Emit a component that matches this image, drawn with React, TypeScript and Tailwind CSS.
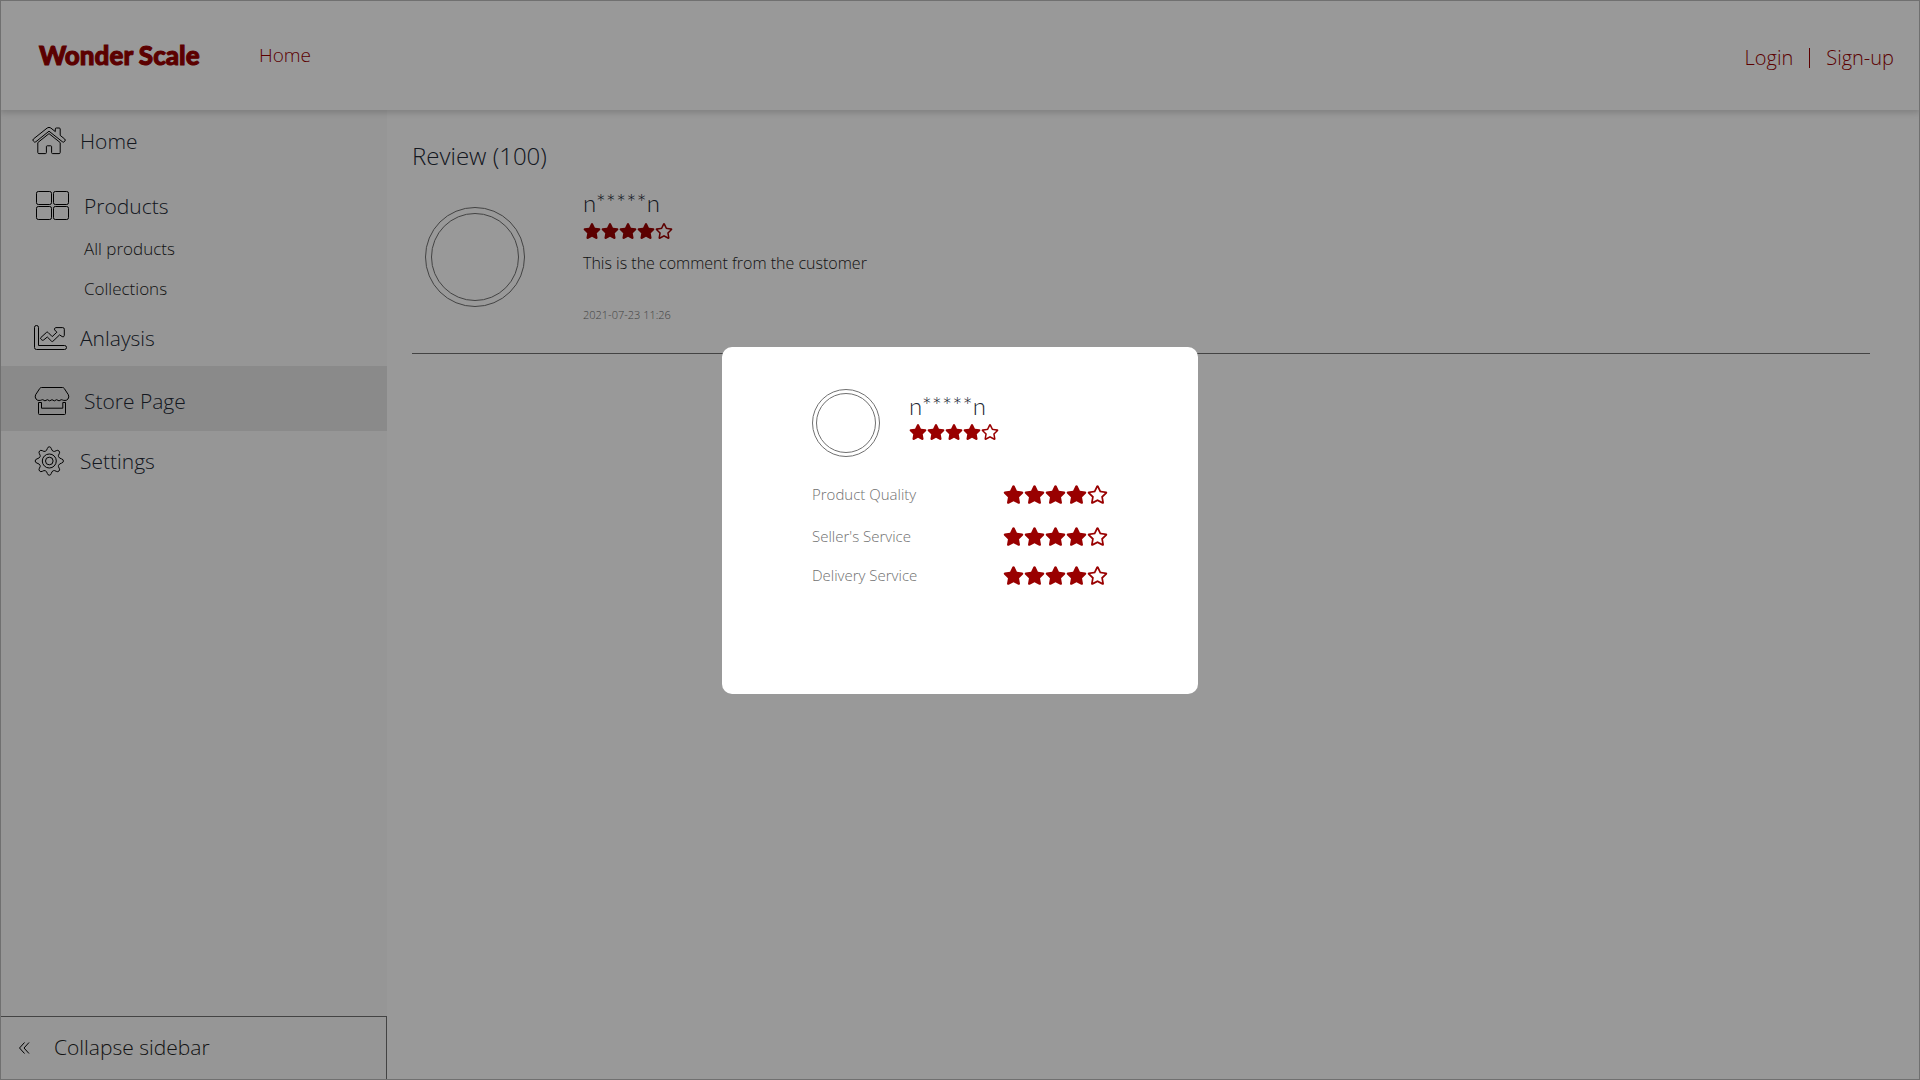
import type { ReactNode } from "react";
import { FaRegStar, FaStar } from "react-icons/fa";

function HomeIcon() {
  return (
    <svg className="h-8 w-9" viewBox="0 0 36 32" fill="none" stroke="#000" strokeWidth="1" strokeLinejoin="round" aria-hidden="true">
      <path d="M1.5 16.2 Q0.2 15 1.4 14 L15.2 3 Q17 1.7 18.8 3 L23.3 6.6 V4 Q23.3 3 24.3 3 H27.2 Q28.2 3 28.2 4 V10.4 L32.7 14 Q33.9 15 32.8 16.2 Q31.8 17.9 30.3 16.7 L17 6.2 L3.8 16.8 Q2.5 17.8 1.5 16.2 Z" />
      <path d="M5.8 17.6 L17 8.6 L28.2 17.6 V27.5 Q28.2 28.6 27.1 28.6 H20.6 Q19.6 28.6 19.6 27.6 V21.6 Q19.6 20.8 18.8 20.8 H15.2 Q14.4 20.8 14.4 21.6 V27.6 Q14.4 28.6 13.4 28.6 H6.9 Q5.8 28.6 5.8 27.5 Z" />
    </svg>
  );
}

function ProductsIcon() {
  return (
    <svg className="h-8 w-10" viewBox="0 0 40 32" fill="none" stroke="#000" strokeWidth="1" aria-hidden="true">
      <rect x="4.5" y="1.5" width="15" height="13" rx="1.8" />
      <rect x="21.5" y="1.5" width="15" height="13" rx="1.8" />
      <rect x="4.5" y="16.5" width="15" height="13" rx="1.8" />
      <rect x="21.5" y="16.5" width="15" height="13" rx="1.8" />
    </svg>
  );
}

function AnalysisIcon() {
  return (
    <svg className="h-8 w-9" viewBox="0 0 36 32" fill="none" stroke="#000" strokeWidth="1" strokeLinejoin="round" aria-hidden="true">
      <path d="M2.5 5.3 Q2.5 3.5 4.5 3.5 Q6.5 3.5 6.5 5.3 V23.5 H32.5 Q34.5 23.5 34.5 25.5 Q34.5 27.5 32.5 27.5 H4.5 Q2.5 27.5 2.5 25.5 Z" />
      <path d="M8.8 15.6 L14.6 10.3 Q15.3 9.7 16 10.4 L20.2 14.6 L24.9 10.2 L22.6 7.9 Q21.9 6 23.9 5.6 H30.7 Q32.3 5.6 32.3 7.2 V13.4 Q31.9 15.6 30.2 14.6 L27.6 12.9 L20.9 19.3 Q20.2 19.8 19.5 19.2 L15.3 15 L11.6 18 Q10.7 18.7 9.9 18 L8.8 17 Q8.2 16.3 8.8 15.6 Z" />
    </svg>
  );
}

function StoreIcon() {
  return (
    <svg className="h-8 w-10" viewBox="0 0 40 32" fill="none" stroke="#000" strokeWidth="1" strokeLinejoin="round" aria-hidden="true">
      <path d="M9.5 2.5 H30.5 Q31.6 2.5 32.2 3.4 L36.4 9.8 Q37.4 12 36 14 Q34.5 16 31.8 15.4 Q30.4 14.9 29.2 14.7 Q27.2 17 24.6 14.7 Q22.4 17 20 14.7 Q17.6 17 15.4 14.7 Q12.8 17 10.8 14.7 Q9.6 14.9 8.2 15.4 Q5.5 16 4 14 Q2.6 12 3.6 9.8 L7.8 3.4 Q8.4 2.5 9.5 2.5 Z" />
      <path d="M6.5 17.5 H9.5 V23.2 H30.8 V17.5 H33.5 V28.5 Q33.5 29.5 32.5 29.5 H7.5 Q6.5 29.5 6.5 28.5 Z" />
    </svg>
  );
}

function SettingsIcon() {
  return (
    <svg className="h-8 w-9" viewBox="0 0 36 32" fill="none" stroke="#000" strokeWidth="1" strokeLinejoin="round" aria-hidden="true">
      <path d="M15.3 3.6 Q15.8 1.8 17.3 1.8 Q18.8 1.8 19.3 3.6 Q19.7 5.7 21.4 6.3 Q22.6 6.8 24.2 5.7 Q26 4.8 26.9 5.9 Q28.2 7 27.2 8.8 Q26 10.5 26.5 11.6 Q27.3 13.4 29.6 13.9 Q31.4 14.4 31.4 16 Q31.4 17.6 29.6 18.1 Q27.3 18.6 26.5 20.4 Q26 21.5 27.2 23.2 Q28.2 25 26.9 26.1 Q26 27.2 24.2 26.3 Q22.6 25.2 21.4 25.7 Q19.7 26.3 19.3 28.4 Q18.8 30.2 17.3 30.2 Q15.8 30.2 15.3 28.4 Q14.9 26.3 13.2 25.7 Q12 25.2 10.4 26.3 Q8.6 27.2 7.7 26.1 Q6.4 25 7.4 23.2 Q8.6 21.5 8.1 20.4 Q7.3 18.6 5 18.1 Q3.2 17.6 3.2 16 Q3.2 14.4 5 13.9 Q7.3 13.4 8.1 11.6 Q8.6 10.5 7.4 8.8 Q6.4 7 7.7 5.9 Q8.6 4.8 10.4 5.7 Q12 6.8 13.2 6.3 Q14.9 5.7 15.3 3.6 Z" />
      <circle cx="17.3" cy="16" r="7" />
      <circle cx="17.3" cy="16" r="3.8" />
    </svg>
  );
}

function Stars({ value, large = false }: { value: number; large?: boolean }) {
  return (
    <div className="flex text-[#990000]" role="img" aria-label={`${value} out of 5 stars`}>
      {[1, 2, 3, 4, 5].map((n) => {
        const Icon = n <= value ? FaStar : FaRegStar;
        return <Icon key={n} className={large ? "size-[21px]" : "size-[18px]"} />;
      })}
    </div>
  );
}

function NavRow({ icon, label, className }: { icon: ReactNode; label: string; className: string }) {
  return (
    <a href="#" className={`flex items-center gap-3 pl-8 text-[21px] text-[#222834] ${className}`}>
      {icon}
      <span className="pt-0.5">{label}</span>
    </a>
  );
}

function Sidebar() {
  return (
    <aside className="flex w-[387px] shrink-0 flex-col bg-[#fafafa]">
      <nav className="flex flex-col" aria-label="Store">
        <NavRow icon={<HomeIcon />} label="Home" className="mb-2 h-16 pb-0.5" />
        <NavRow icon={<ProductsIcon />} label="Products" className="h-12" />
        <a href="#" className="flex h-10 items-center pb-0.5 pl-[84px] text-[17px] text-[#222222]">All products</a>
        <a href="#" className="flex h-10 items-center pb-0.5 pl-[84px] text-[17px] text-[#222222]">Collections</a>
        <NavRow icon={<AnalysisIcon />} label="Anlaysis" className="h-14" />
        <NavRow icon={<StoreIcon />} label="Store Page" className="h-[65px] bg-[#e6e6e6] pt-1" />
        <NavRow icon={<SettingsIcon />} label="Settings" className="h-[60px]" />
      </nav>
      <button type="button" className="mt-auto flex h-16 items-center gap-6 border-t border-r border-[#707070] pb-0.5 pl-[18px] text-left text-[21px] text-[#222222]">
        <svg className="h-3 w-3" viewBox="0 0 12 12" fill="none" stroke="#000" strokeWidth="1" aria-hidden="true">
          <path d="M6.5 0.5 L1.5 6 L6.5 11.5 M11 0.5 L6 6 L11 11.5" />
        </svg>
        <span>Collapse sidebar</span>
      </button>
    </aside>
  );
}

function ReviewDialog() {
  const ratings = [
    { label: "Product Quality", row: "h-[44px]" },
    { label: "Seller's Service", row: "h-[40px]" },
    { label: "Delivery Service", row: "h-[38px]" },
  ];
  return (
    <div className="fixed inset-0 flex items-start justify-center border border-[#707070] bg-black/40 pt-[346px]">
      <div role="dialog" aria-label="Review details" className="min-h-[347px] w-[476px] rounded-[10px] bg-white px-[90px] pt-[42px]">
        <div className="flex gap-[29px]">
          <div className="size-[68px] rounded-full border border-[#707070] p-[3px]">
            <div className="size-full rounded-full border border-[#707070]" />
          </div>
          <div className="pt-1">
            <p className="mb-1 font-['Lato',sans-serif] text-2xl leading-[26px] text-[#222834]">n*****n</p>
            <Stars value={4} />
          </div>
        </div>
        <dl className="mt-[15px]">
          {ratings.map((r) => (
            <div key={r.label} className={`flex items-center ${r.row}`}>
              <dt className="w-[191px] text-[15px] text-[#707070]">{r.label}</dt>
              <dd><Stars value={4} large /></dd>
            </div>
          ))}
        </dl>
      </div>
    </div>
  );
}

export default function App() {
  return (
    <div className="flex min-h-screen flex-col bg-white font-['Open_Sans',sans-serif] font-light">
      <header className="relative flex h-[110px] items-center bg-white pr-[26px] pl-[39px] text-[#990000] shadow-[0_3px_6px_rgba(0,0,0,0.16)]">
        <a href="#" className="w-[220px] font-['Lato',sans-serif] text-[26px] font-black [-webkit-text-stroke:1px]">Wonder Scale</a>
        <a href="#" className="text-[19px]">Home</a>
        <div className="ml-auto flex items-center gap-4 pt-1.5 text-xl">
          <a href="#">Login</a>
          <span className="h-5 w-px bg-[#990000]" />
          <a href="#">Sign-up</a>
        </div>
      </header>
      <div className="flex flex-1">
        <Sidebar />
        <main className="flex-1 pt-[30px] pr-[50px] pl-[25px]">
          <h1 className="text-2xl leading-8 text-[#222834]">Review (100)</h1>
          <article className="mt-4 flex h-[166px] gap-[58px] border-b border-[#707070] pl-[13px]">
            <div className="mt-[19px] size-[100px] rounded-full border border-[#707070] p-[5px]">
              <div className="size-full rounded-full border border-[#707070]" />
            </div>
            <div>
              <p className="mb-1 font-['Lato',sans-serif] text-2xl leading-[30px] text-[#222834]">n*****n</p>
              <Stars value={4} />
              <p className="mt-1 text-base leading-[38px] text-[#222222]">This is the comment from the customer</p>
              <p className="mt-[22px] text-[11px] leading-[22px] text-[#707070]">2021-07-23 11:26</p>
            </div>
          </article>
        </main>
      </div>
      <ReviewDialog />
    </div>
  );
}
